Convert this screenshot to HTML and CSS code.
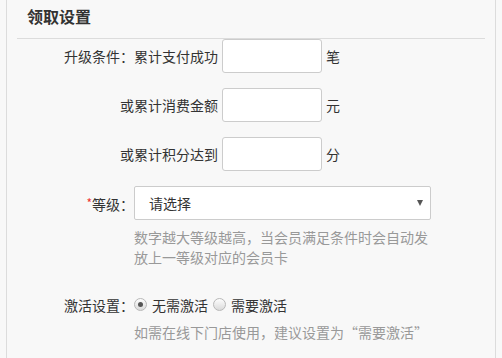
FILE: index.html
```html
<!DOCTYPE html>
<html lang="zh">
<head>
<meta charset="utf-8">
<link rel="stylesheet" href="styles.css">
</head>
<body>
<div class="panel">
  <div class="header"><h2 class="title">领取设置</h2></div>
  <div class="form">
    <div class="row">
      <span class="label-wide">升级条件：累计支付成功</span>
      <span class="input"></span>
      <span class="unit">笔</span>
    </div>
    <div class="row">
      <span class="label-wide">或累计消费金额</span>
      <span class="input"></span>
      <span class="unit">元</span>
    </div>
    <div class="row">
      <span class="label-wide">或累计积分达到</span>
      <span class="input"></span>
      <span class="unit">分</span>
    </div>
    <div class="row">
      <span class="label"><span class="req">*</span>等级：</span>
      <div class="select">
        <span class="select-text">请选择</span>
        <span class="arrow"></span>
      </div>
    </div>
    <p class="help help-level">数字越大等级越高，当会员满足条件时会自动发放上一等级对应的会员卡</p>
    <div class="row row-radio">
      <span class="label">激活设置：</span>
      <span class="radio checked"></span>
      <span class="radio-text">无需激活</span>
      <span class="radio"></span>
      <span class="radio-text">需要激活</span>
    </div>
    <p class="help help-active">如需在线下门店使用，建议设置为“需要激活”</p>
  </div>
</div>
</body>
</html>
```

FILE: styles.css
```css
html, body {
  margin: 0;
  padding: 0;
  background: #f8f8f8;
}
body {
  font-family: "Noto Sans CJK SC", "Noto Sans", sans-serif;
  font-size: 14px;
  color: #333;
}
.panel {
  margin-left: 6px;
  width: 488px;
  height: 358px;
  border-left: 1px solid #dcdcdc;
  border-right: 1px solid #dcdcdc;
  box-sizing: content-box;
}
.header {
  margin: 0 10px;
  height: 38px;
  border-bottom: 1px solid #dcdcdc;
}
.title {
  margin: 0;
  padding-left: 10px;
  font-size: 16px;
  font-weight: bold;
  line-height: 33px;
  color: #333;
}
.form {
  display: flex;
  flex-direction: column;
}
.row {
  display: flex;
  align-items: center;
  height: 34px;
  margin-bottom: 15px;
  line-height: 20px;
}
.label-wide {
  width: 211px;
  text-align: right;
  flex: none;
}
.label {
  width: 127px;
  text-align: right;
  flex: none;
}
.req {
  color: #e33;
  font-size: 12px;
  vertical-align: 2px;
}
.input {
  width: 100px;
  height: 34px;
  box-sizing: border-box;
  margin-left: 4px;
  background: #fff;
  border: 1px solid #ccc;
  border-radius: 3px;
  flex: none;
}
.unit {
  margin-left: 4px;
}
.select {
  width: 297px;
  height: 34px;
  box-sizing: border-box;
  background: #fff;
  border: 1px solid #ccc;
  border-radius: 2px;
  display: flex;
  align-items: center;
  justify-content: space-between;
  padding: 0 7px 0 14px;
}
.arrow {
  width: 0;
  height: 0;
  border-left: 3.5px solid transparent;
  border-right: 3.5px solid transparent;
  border-top: 6px solid #555;
  margin-bottom: 1px;
}
.help {
  margin: 0;
  padding-left: 127px;
  width: 297px;
  color: #999;
  line-height: 20px;
}
.help-level {
  margin-top: -8px;
  margin-bottom: 21px;
}
.row-radio {
  margin-bottom: 0;
}
.radio {
  width: 13px;
  height: 13px;
  box-sizing: border-box;
  border-radius: 50%;
  border: 1px solid #b8b8b8;
  background: linear-gradient(#fdfdfd, #dadada);
  display: flex;
  align-items: center;
  justify-content: center;
  flex: none;
  margin-top: -1px;
}
.radio.checked::after {
  content: "";
  width: 5px;
  height: 5px;
  border-radius: 50%;
  background: #555;
}
.radio-text {
  margin-left: 5px;
  margin-right: 5px;
}
.help-active {
  width: 340px;
}
```
